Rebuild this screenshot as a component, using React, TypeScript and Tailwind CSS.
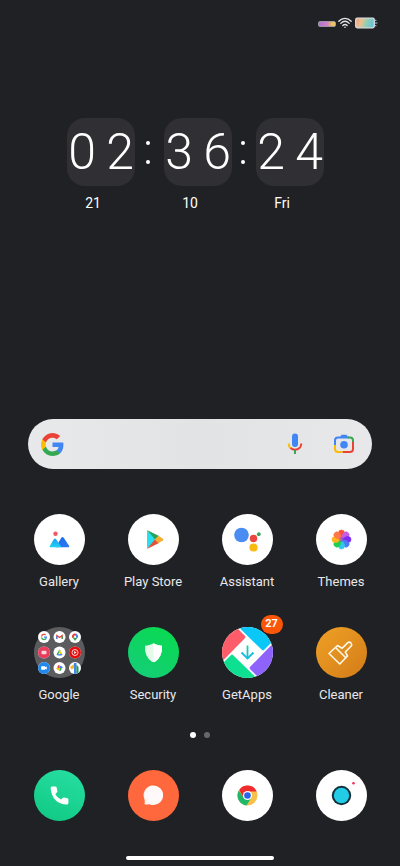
import type { ReactNode } from "react";

const ICON = "block size-[51px]";

function StatusBar() {
  return (
    <header className="flex h-[46px] items-center justify-end gap-[2px] pr-[22px]">
      <svg className="mt-[2px] h-[6px] w-[18px]" viewBox="0 0 18 6" aria-hidden="true">
        <defs>
          <linearGradient id="sig">
            <stop offset="0" stopColor="#b06fd0" />
            <stop offset="0.55" stopColor="#cf86c4" />
            <stop offset="0.75" stopColor="#f0b85c" />
            <stop offset="1" stopColor="#e8d070" />
          </linearGradient>
        </defs>
        <rect x="0.5" y="0.5" width="17" height="5" rx="1.5" fill="url(#sig)" stroke="#a9a3b4" strokeWidth="0.8" />
      </svg>
      <svg className="h-[12px] w-[14px]" viewBox="0 0 14 12" fill="none" stroke="#e4e6e8" strokeWidth="1.3" strokeLinecap="round" aria-hidden="true">
        <path d="M0.8 4.2C4.4 0.4 9.6 0.4 13.2 4.2M2.8 6.4C5.4 3.8 8.6 3.8 11.2 6.4M4.8 8.5C6.3 7.1 7.7 7.1 9.2 8.5" />
        <circle cx="7" cy="10.3" r="0.8" fill="#e4e6e8" stroke="none" />
      </svg>
      <svg className="ml-px h-[12px] w-[23px]" viewBox="0 0 23 12" aria-hidden="true">
        <defs>
          <linearGradient id="bat" x2="1" y2="0.2">
            <stop offset="0" stopColor="#f19a84" />
            <stop offset="0.35" stopColor="#eec08c" />
            <stop offset="0.65" stopColor="#8fd0b4" />
            <stop offset="1" stopColor="#6fc3d8" />
          </linearGradient>
        </defs>
        <rect x="0.7" y="1.2" width="18.6" height="9.6" rx="1.5" fill="url(#bat)" stroke="#e0e2e4" strokeWidth="1.2" />
        <path d="M20 3.3H21.4M20 6H22.4M20 8.7H21.4" stroke="#a8d8de" strokeWidth="1" />
      </svg>
    </header>
  );
}

function ClockUnit({ value, label }: { value: string; label: string }) {
  return (
    <div className="w-[68px]">
      <div className="flex h-[68px] items-center justify-center rounded-[18px] bg-[#303034] text-[50px] leading-[68px] font-light text-white">
        {value.split("").map((d, i) => (
          <span key={i} className="w-[38px] shrink-0 text-center">{d}</span>
        ))}
      </div>
      <p className="mt-[7px] pr-4 text-center text-[14px] leading-5 text-white">{label}</p>
    </div>
  );
}

function Colon() {
  return (
    <div className="flex h-[68px] flex-col items-center justify-center gap-[15px] pr-[3px]">
      <span className="size-1 rounded-full bg-white" />
      <span className="size-1 rounded-full bg-white" />
    </div>
  );
}

function Clock() {
  return (
    <section className="mx-auto mt-[72px] grid grid-cols-[68px_29px_68px_24px_68px] pr-[9px]" aria-label="Clock">
      <ClockUnit value="02" label="21" />
      <Colon />
      <ClockUnit value="36" label="10" />
      <Colon />
      <ClockUnit value="24" label="Fri" />
    </section>
  );
}

function GoogleG() {
  return (
    <>
      <path fill="#4285f4" d="M22.5 12.3c0-.8-.1-1.6-.2-2.3H12v4.4h5.9a5 5 0 0 1-2.2 3.3v2.8h3.6c2-1.9 3.2-4.7 3.2-8.2z" />
      <path fill="#34a853" d="M12 23c3 0 5.500-1 7.300-2.600l-3.600-2.800c-1 .7-2.200 1.100-3.700 1.100-2.900 0-5.300-2-6.200-4.600H2.200v2.800A11 11 0 0 0 12 23z" />
      <path fill="#fbbc05" d="M5.800 14.100a6.600 6.600 0 0 1 0-4.200V7.100H2.200a11 11 0 0 0 0 9.900z" />
      <path fill="#ea4335" d="M12 5.400c1.600 0 3.100.6 4.200 1.600l3.200-3.100A11 11 0 0 0 2.200 7.100l3.600 2.800C6.700 7.300 9.100 5.400 12 5.400z" />
    </>
  );
}

function SearchBar() {
  return (
    <form className="mx-7 mt-[206px] flex h-[50px] items-center rounded-full bg-linear-to-r from-[#e8e9ea] via-[#e1e3e5] to-[#e8e8ea] pr-[17px] pl-3">
      <svg className="size-[25px] shrink-0" viewBox="0 0 24 24" aria-hidden="true"><GoogleG /></svg>
      <input type="search" aria-label="Search" className="mx-2 min-w-0 flex-1 bg-transparent text-[#202124] outline-none" />
      <button type="button" aria-label="Voice search" className="mr-[30px]">
        <svg className="block h-[22px] w-[16px]" viewBox="0 0 16 22" fill="none" strokeWidth="2">
          <rect x="5" y="0.5" width="6" height="13.500" rx="3" fill="#4285f4" />
          <path d="M1.700 10.500C1.700 12.600 2.500 14.200 3.700 15.300" stroke="#fbbc05" />
          <path d="M3.500 15.100C6 17.400 10 17.400 12.500 15.100C13.700 13.900 14.300 12.300 14.300 10.500" stroke="#ea4335" />
          <path d="M8 17V21" stroke="#34a853" />
        </svg>
      </button>
      <button type="button" aria-label="Search with camera">
        <svg className="block h-[22px] w-[22px]" viewBox="0 0 22 22" fill="none" strokeWidth="2">
          <path d="M2 12V7.500Q2 4.500 5 4.500H16" stroke="#4285f4" />
          <path d="M7 4L8.500 1.800H13.500L15 4Z" fill="#4285f4" />
          <path d="M15 4.500H17Q20 4.500 20 7.500V9" stroke="#34a853" />
          <path d="M20 9V16Q20 19 17 19H9.500" stroke="#ea4335" />
          <path d="M9.500 19H5Q2 19 2 16V12" stroke="#fbbc05" />
          <circle cx="11" cy="11.800" r="3.800" fill="#4285f4" />
        </svg>
      </button>
    </form>
  );
}

function Disc({ fill, children }: { fill: string; children: ReactNode }) {
  return (
    <svg className={ICON} viewBox="0 0 51 51" aria-hidden="true">
      <circle cx="25.500" cy="25.500" r="25.500" fill={fill} />
      {children}
    </svg>
  );
}

function GalleryIcon() {
  return (
    <Disc fill="#fff">
      <defs>
        <linearGradient id="galA" x1="0" y1="0" x2="0" y2="1"><stop stopColor="#1b9df5" /><stop offset="1" stopColor="#20d3f3" /></linearGradient>
        <linearGradient id="galB" x1="0" y1="0" x2="1" y2="1"><stop stopColor="#1769ea" /><stop offset="1" stopColor="#2f7af4" /></linearGradient>
      </defs>
      <circle cx="21.500" cy="19.700" r="2.200" fill="#f25864" />
      <path d="M21.500 33.200L27.300 23.800Q28.500 22.200 29.700 23.800L35.200 32Q35.600 33.200 34.500 33.200Z" fill="url(#galB)" />
      <path d="M16.300 33.200Q15.200 33 15.800 32L19.800 25.200Q21 23.600 22.200 25.200L27.500 33.200Z" fill="url(#galA)" />
    </Disc>
  );
}

function PlayIcon() {
  return (
    <Disc fill="#fff">
      <path d="M19 16.500V34.500L29 25.500Z" fill="#27dfee" />
      <path d="M19 16L31 22L27.500 26Z" fill="#24a45c" />
      <path d="M19 35L31 29L27.500 24.800Z" fill="#e4503a" />
      <path d="M30.500 21.800L35 24.700Q35.900 25.500 35 26.300L30.500 29.200L26.700 25.500Z" fill="#f5ae35" />
    </Disc>
  );
}

function AssistantIcon() {
  return (
    <Disc fill="#fff">
      <circle cx="19.500" cy="21" r="7.300" fill="#4a8cf2" />
      <circle cx="31.500" cy="24.500" r="3.700" fill="#ea4540" />
      <circle cx="31.500" cy="33.500" r="4.100" fill="#f8bb12" />
      <circle cx="36.800" cy="20.200" r="1.900" fill="#35a456" />
    </Disc>
  );
}

const PETALS = ["#fb503e", "#c75ce8", "#7c2cf0", "#4b7cf0", "#33c5ee", "#20cf50", "#ffb31c", "#ff7848"];

function ThemesIcon() {
  return (
    <Disc fill="#fff">
      {PETALS.map((c, i) => (
        <path key={c} d="M25.500 25.500L22.500 20.500V19A3 3 0 0 1 28.500 19V20.500Z" fill={c} stroke={c} strokeWidth="0.600" transform={`rotate(${i * 45} 25.500 25.500)`} />
      ))}
      <circle cx="25.500" cy="25.500" r="2.500" fill="#8d48d0" opacity="0.5" />
    </Disc>
  );
}

function ChromeMark() {
  return (
    <>
      <circle r="10" fill="#f7c04b" />
      <path d="M-8.700 -5A10 10 0 0 0 -1 10L4 2L-4 2Z" fill="#20b868" />
      <path d="M-8.300 -5.500A10 10 0 0 1 9.200 -4H0L-4 2Z" fill="#ef2b2d" />
      <circle r="4.600" fill="#fff" />
      <circle r="3.300" fill="#2864ee" />
    </>
  );
}

function FolderIcon() {
  return (
    <Disc fill="#5c5c5e">
      {[10, 25.5, 41].map((y) => [10, 25.5, 41].map((x) => <circle key={`${x}-${y}`} cx={x} cy={y} r="6" fill="#fff" />))}
      <g transform="translate(6.500 6.500) scale(0.290)"><GoogleG /></g>
      <path d="M22.800 12V8.500L25.500 10.500L28.200 8.500V12" fill="none" stroke="#ea4335" strokeWidth="1.200" />
      <path d="M22.800 12V9" stroke="#4285f4" strokeWidth="1.200" />
      <path d="M28.200 12V9" stroke="#34a853" strokeWidth="1.200" />
      <path d="M41 6.500A3 3 0 0 0 38.300 11L41 10Z" fill="#ea4335" />
      <path d="M41 6.500A3 3 0 0 1 43.700 11L41 10Z" fill="#4285f4" />
      <path d="M38.500 10.500L41 14L43.700 10.500Z" fill="#34a853" />
      <circle cx="41" cy="9.700" r="1.100" fill="#fff" />
      <circle cx="10" cy="25.500" r="6" fill="#e93d5c" />
      <rect x="7.500" y="23.700" width="5" height="3.600" rx="1" fill="#fbd5dc" />
      <path d="M25.500 22.500L22.500 27.500L23.500 28.500L26.500 23.500Z" fill="#34a853" />
      <path d="M25.500 22.500L28.500 27.500H26.700L24.500 23.500Z" fill="#fbbc05" />
      <path d="M23.500 28.500H27.500L28.500 27H24.500Z" fill="#4285f4" />
      <circle cx="41" cy="25.500" r="6" fill="#e40c0c" />
      <circle cx="41" cy="25.500" r="3" fill="none" stroke="#fff" strokeWidth="0.800" />
      <path d="M40.200 24V27L42.600 25.500Z" fill="#fff" />
      <circle cx="10" cy="41" r="6" fill="#2188ee" />
      <path d="M7.200 39.300H11.200V40.300L12.800 39.500V42.500L11.200 41.700V42.700H7.200Z" fill="#fff" />
      <path d="M25.500 41V37.700A2.500 2.500 0 0 0 23.500 41Z" fill="#ea4335" />
      <path d="M25.500 41H28.800A2.500 2.500 0 0 0 25.500 39Z" fill="#4285f4" />
      <path d="M25.500 41V44.300A2.500 2.500 0 0 0 27.500 41Z" fill="#34a853" />
      <path d="M25.500 41H22.200A2.500 2.500 0 0 0 25.500 43Z" fill="#fbbc05" />
      <path d="M36 40L41 36.500V40.500L37.500 42.500Z" fill="#f6b91a" />
      <path d="M40 36H42.500V46.800H40Z" fill="#4285f4" />
      <path d="M42.500 37.500L44.500 40V45.800L42.500 46.500Z" fill="#249a54" />
    </Disc>
  );
}

function SecurityIcon() {
  return (
    <Disc fill="url(#secBg)">
      <defs>
        <linearGradient id="secBg" x1="0.800" y1="0" x2="0.200" y2="1"><stop stopColor="#08da50" /><stop offset="1" stopColor="#15cd78" /></linearGradient>
      </defs>
      <path d="M25.500 16.300C28 18 31 18.500 34 18.800Q34.700 29.500 27.300 34.500Q25.500 35.700 23.700 34.500Q16.300 29.500 17 18.800C20 18.500 23 18 25.500 16.300Z" fill="#e4faeb" />
      <path d="M25.500 16.300C28 18 31 18.500 34 18.800Q34.700 29.500 27.300 34.500Q26.400 35.200 25.500 35.200Z" fill="#fff" />
    </Disc>
  );
}

function GetAppsIcon() {
  return (
    <Disc fill="#fff">
      <defs>
        <clipPath id="gaClip"><circle cx="25.500" cy="25.500" r="25.500" /></clipPath>
        <linearGradient id="gaArrow" x1="0" y1="0" x2="0" y2="1"><stop stopColor="#12d69a" /><stop offset="1" stopColor="#13b6e8" /></linearGradient>
      </defs>
      <g clipPath="url(#gaClip)">
        {["#ff5c6a", "#0bc7f8", "#8d63fb", "#0ee092"].map((c, i) => (
          <path key={c} d="M15 1L22.800 8.800Q24 10 22.800 11.200L2 32.500L-6 34V-6H10Z" fill={c} transform={`rotate(${i * 90} 25.500 25.500)`} />
        ))}
      </g>
      <path d="M24.600 18.500H26.400V32H24.600Z" fill="url(#gaArrow)" />
      <path d="M19.500 25.500L25.500 31.500L31.500 25.500" fill="none" stroke="#15bfdd" strokeWidth="1.800" />
    </Disc>
  );
}

function CleanerIcon() {
  return (
    <Disc fill="url(#clBg)">
      <defs>
        <linearGradient id="clBg" x1="0" y1="0" x2="1" y2="1"><stop stopColor="#f0a126" /><stop offset="1" stopColor="#d27c18" /></linearGradient>
      </defs>
      <g fill="none" stroke="#fff8ea" strokeWidth="1.600" strokeLinejoin="round">
        <path d="M13 26.500L21.500 18.500L26 21.300L31.800 15.700Q33.500 14.500 35 16Q36.300 17.600 35 19.200L29.300 25L31.500 29L23.800 37Z" />
        <path d="M19.500 20.500L30 31" />
      </g>
    </Disc>
  );
}

function PhoneIcon() {
  return (
    <Disc fill="url(#phBg)">
      <defs>
        <linearGradient id="phBg" x1="0.700" y1="0" x2="0.300" y2="1"><stop stopColor="#25dda0" /><stop offset="1" stopColor="#12ca85" /></linearGradient>
      </defs>
      <path d="M18 16.600H21.500Q22.500 16.700 22.700 17.700L23.400 21Q23.500 22 22.800 22.600L21.300 24.200Q23 27.600 27 29.600L28.600 28Q29.300 27.400 30.200 27.600L33.500 28.300Q34.400 28.600 34.400 29.500V33Q34.300 34.500 32.900 34.500Q18.300 33.800 16.600 18.200Q16.600 16.800 18 16.600Z" fill="#fff" />
    </Disc>
  );
}

function MessagesIcon() {
  return (
    <Disc fill="#ff673d">
      <path d="M16.500 34.300Q17.200 32.500 16.500 29.500A9.800 9.800 0 1 1 21.300 34.200Q19 34.800 16.500 34.300Z" fill="#fff3ef" />
      <circle cx="26" cy="25" r="9" fill="#fff" opacity="0.600" />
    </Disc>
  );
}

function ChromeIcon() {
  return (
    <Disc fill="#fff">
      <g transform="translate(25.500 25.500)"><ChromeMark /></g>
    </Disc>
  );
}

function CameraIcon() {
  return (
    <Disc fill="#fff">
      <circle cx="25.500" cy="25.500" r="9.700" fill="#123038" />
      <circle cx="25.500" cy="25.500" r="7.700" fill="#22cbe6" />
      <circle cx="37.500" cy="13.200" r="1.300" fill="#f0345c" />
    </Disc>
  );
}

const APPS: { name: string; icon: ReactNode; badge?: string }[] = [
  { name: "Gallery", icon: <GalleryIcon /> },
  { name: "Play Store", icon: <PlayIcon /> },
  { name: "Assistant", icon: <AssistantIcon /> },
  { name: "Themes", icon: <ThemesIcon /> },
  { name: "Google", icon: <FolderIcon /> },
  { name: "Security", icon: <SecurityIcon /> },
  { name: "GetApps", icon: <GetAppsIcon />, badge: "27" },
  { name: "Cleaner", icon: <CleanerIcon /> },
];

const DOCK: { name: string; icon: ReactNode }[] = [
  { name: "Phone", icon: <PhoneIcon /> },
  { name: "Messages", icon: <MessagesIcon /> },
  { name: "Chrome", icon: <ChromeIcon /> },
  { name: "Camera", icon: <CameraIcon /> },
];

export default function App() {
  return (
    <main className="flex min-h-screen flex-col bg-[#202124] font-['Roboto',sans-serif]">
      <StatusBar />
      <Clock />
      <SearchBar />
      <div className="mx-3 mt-[45px] grid grid-cols-4 gap-y-[23px]">
        {APPS.map((app) => (
          <button key={app.name} type="button" className="flex flex-col items-center">
            <span className="relative">
              {app.icon}
              {app.badge && (
                <span className="absolute -top-3 -right-[10px] flex h-[19px] w-[22px] items-center justify-center rounded-full bg-[#fb5607] text-[11px] font-bold text-white">
                  {app.badge}
                </span>
              )}
            </span>
            <span className="mt-[7px] text-[13px] leading-5 whitespace-nowrap text-[#e8e8ea]">{app.name}</span>
            <span className="h-3" />
          </button>
        ))}
      </div>
      <div className="mt-[15px] flex justify-center gap-2" aria-label="Page 1 of 2">
        <span className="size-[6px] rounded-full bg-white" />
        <span className="size-[6px] rounded-full bg-[#67686b]" />
      </div>
      <nav className="mx-3 mt-[32px] grid grid-cols-4 justify-items-center" aria-label="Dock">
        {DOCK.map((app) => (
          <button key={app.name} type="button" aria-label={app.name}>{app.icon}</button>
        ))}
      </nav>
      <div className="mx-auto mt-auto mb-[6px] h-1 w-[148px] rounded-full bg-white" />
    </main>
  );
}
